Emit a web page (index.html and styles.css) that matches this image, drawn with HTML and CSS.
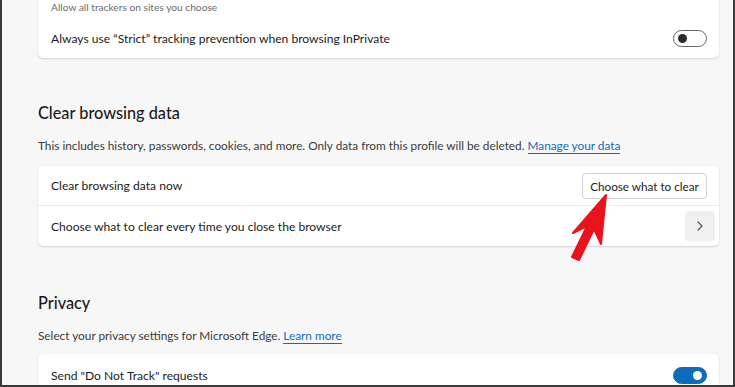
FILE: index.html
```html
<!DOCTYPE html>
<html lang="en">
<head>
    <meta charset="UTF-8">
    <title>Settings - Privacy</title>
    <link rel="stylesheet" href="styles.css">
</head>
<body>
    <div class="frame">
        <div class="content">
            <div class="card card-top">
                <div class="sub">Allow all trackers on sites you choose</div>
                <div class="row row-top">
                    <span class="label">Always use “Strict” tracking prevention when browsing InPrivate</span>
                    <span class="toggle"></span>
                </div>
            </div>

            <h2 class="section-title">Clear browsing data</h2>
            <p class="section-desc">This includes history, passwords, cookies, and more. Only data from this profile will be deleted. <a href="#">Manage your data</a></p>
            <div class="card">
                <div class="row row-first">
                    <span class="label">Clear browsing data now</span>
                    <button class="btn">Choose what to clear</button>
                </div>
                <div class="row row-second">
                    <span class="label">Choose what to clear every time you close the browser</span>
                    <span class="chevron">
                        <svg width="10" height="12" viewBox="0 0 10 12"><path d="M3 2 L7 6 L3 10" fill="none" stroke="#555" stroke-width="1.2" stroke-linecap="round" stroke-linejoin="round"/></svg>
                    </span>
                </div>
            </div>

            <h2 class="section-title privacy">Privacy</h2>
            <p class="section-desc tight">Select your privacy settings for Microsoft Edge. <a href="#">Learn more</a></p>
            <div class="card">
                <div class="row row-last">
                    <span class="label">Send "Do Not Track" requests</span>
                    <span class="toggle on"></span>
                </div>
            </div>
        </div>

        <!-- red pointer drawn over the page -->
        <svg class="pointer" width="735" height="387" viewBox="0 0 735 387">
            <polygon points="606,195 601,244 594,229 579,260 572,257 587,226 573,233" fill="#e8131c" stroke="#e8131c" stroke-width="2" stroke-linejoin="round"/>
        </svg>
    </div>
</body>
</html>
```

FILE: styles.css
```css
body {
    margin: 0;
    font-family: Lato, "Open Sans", Arial, sans-serif;
    color: #1b1b1b;
}
.frame {
    position: relative;
    width: 735px;
    height: 387px;
    box-sizing: border-box;
    border-left: 2px solid #3a3a3a;
    border-right: 2px solid #3a3a3a;
    border-bottom: 2px solid #3a3a3a;
    background-color: #f7f7f7;
    overflow: hidden;
}
.content {
    padding: 0 14px 0 36px;
}
.card {
    background-color: #fff;
    border-radius: 5px;
    box-shadow: 0 1px 2px rgba(0, 0, 0, 0.14), 0 0 1px rgba(0, 0, 0, 0.08);
}
.card-top {
    margin-top: -10px;
    border-radius: 0 0 5px 5px;
}
.sub {
    padding: 10px 13px 0;
    font-size: 10.2px;
    line-height: 14px;
    color: #6b6b6b;
}
.row {
    display: flex;
    justify-content: space-between;
    align-items: center;
    padding: 0 12px 0 13px;
}
.row-top {
    height: 40px;
    padding-top: 4px;
}
.row-first {
    height: 39px;
    border-bottom: 1px solid #ececec;
}
.row-second {
    height: 40px;
    padding-right: 4px;
}
.row-last {
    height: 42px;
}
.label {
    font-size: 12.1px;
}
.section-title {
    margin: 41px 0 0;
    font-size: 16.3px;
    line-height: 28px;
    font-weight: 500;
}
.section-title.privacy {
    margin-top: 43px;
}
.section-desc {
    margin: 9px 0 10px;
    font-size: 11.8px;
    line-height: 20px;
    color: #3b3b3b;
}
.section-desc.tight {
    margin-bottom: 8px;
}
.section-desc a {
    color: #0f6cbd;
    text-decoration: none;
    border-bottom: 1px solid #0f6cbd;
}
.toggle {
    position: relative;
    width: 32px;
    height: 15px;
    border: 1px solid #666;
    border-radius: 9px;
}
.toggle::after {
    content: "";
    position: absolute;
    left: 4px;
    top: 3px;
    width: 9px;
    height: 9px;
    border-radius: 50%;
    background-color: #2b2b2b;
}
.toggle.on {
    background-color: #0f6cbd;
    border-color: #0f6cbd;
}
.toggle.on::after {
    left: auto;
    right: 4px;
    background-color: #fff;
}
.btn {
    width: 125px;
    height: 26px;
    padding: 0;
    font-family: inherit;
    font-size: 11.7px;
    color: #1b1b1b;
    background-color: #fff;
    border: 1px solid #d1d1d1;
    border-radius: 4px;
}
.chevron {
    display: flex;
    align-items: center;
    justify-content: center;
    width: 30px;
    height: 30px;
    background-color: #f0f0f0;
    border-radius: 3px;
}
.pointer {
    position: absolute;
    left: -2px;
    top: 0;
    pointer-events: none;
}
```
